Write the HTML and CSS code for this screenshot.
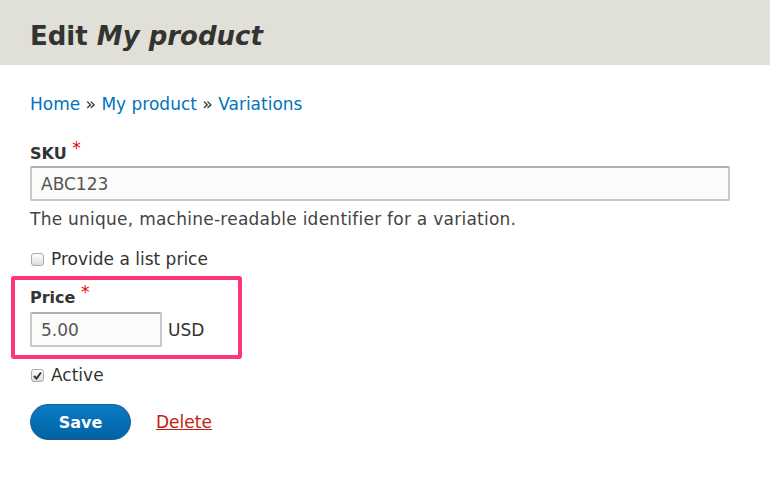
FILE: index.html
```html
<!DOCTYPE html>
<html>
<head>
<meta charset="utf-8">
<link rel="stylesheet" href="styles.css">
</head>
<body>
<header class="page-header">
  <h1 class="title">Edit <em>My product</em></h1>
</header>
<main class="content">
  <nav class="breadcrumb"><a href="#">Home</a> » <a href="#">My product</a> » <a href="#">Variations</a></nav>
  <form class="form">
    <div class="field">
      <label class="label sku-label">SKU <span class="req">*</span></label>
      <input class="text-input wide" type="text" value="ABC123">
      <div class="desc">The unique, machine-readable identifier for a variation.</div>
    </div>
    <div class="check-row">
      <span class="checkbox"></span>
      <span>Provide a list price</span>
    </div>
    <div class="highlight">
      <label class="label">Price <span class="req">*</span></label>
      <div class="price-row">
        <input class="text-input short" type="text" value="5.00">
        <span class="currency">USD</span>
      </div>
    </div>
    <div class="check-row active">
      <span class="checkbox checked"><svg width="9" height="9" viewBox="0 0 9 9"><path d="M1 5 L3.5 7.5 L8 1.5" fill="none" stroke="#333" stroke-width="2"/></svg></span>
      <span>Active</span>
    </div>
    <div class="actions">
      <button type="button" class="btn-save">Save</button>
      <a href="#" class="delete">Delete</a>
    </div>
  </form>
</main>
</body>
</html>
```

FILE: styles.css
```css
* { box-sizing: border-box; }
html, body { margin: 0; padding: 0; background: #fff; }
body {
  font-family: "DejaVu Sans", "Liberation Sans", sans-serif;
  color: #333;
  font-size: 17px;
  width: 770px;
  height: 484px;
  overflow: hidden;
}
.page-header {
  background: #e0e0d8;
  height: 65px;
  padding: 0 30px;
  display: flex;
  align-items: center;
}
.title {
  margin: 0;
  font-size: 26px;
  font-weight: bold;
  color: #333;
  padding-top: 6px;
}
.title em { font-style: italic; }
.content { padding: 0 30px; }
.breadcrumb {
  margin-top: 28px;
  font-size: 17px;
  line-height: 22px;
  color: #333;
}
.breadcrumb a { color: #0074bd; text-decoration: none; }
.form { margin-top: 28px; }
.label {
  display: block;
  font-weight: bold;
  font-size: 16px;
  line-height: 20px;
  margin-bottom: 4px;
}
.sku-label { margin-bottom: 2px; }
.req { color: #e00; font-weight: normal; position: relative; top: -5px; font-size: 17px; }
.text-input {
  display: block;
  height: 35px;
  border: 2px solid #c8c8c4;
  border-top-color: #b0b0aa;
  border-radius: 2px;
  background: #fbfbf9;
  font-family: inherit;
  font-size: 17px;
  color: #555;
  padding: 0 9px;
}
.wide { width: 700px; }
.short { width: 132px; }
.desc {
  margin-top: 8px;
  font-size: 17px;
  letter-spacing: 0.25px;
  line-height: 20px;
  color: #444;
}
.check-row {
  display: flex;
  align-items: center;
  gap: 7px;
  margin-top: 20px;
  font-size: 17px;
  line-height: 20px;
}
.checkbox {
  width: 13px;
  height: 13px;
  border: 1px solid #aaa;
  border-radius: 3px;
  background: linear-gradient(#fff, #ddd);
  display: inline-flex;
  align-items: center;
  justify-content: center;
  margin-left: 1px;
}
.highlight {
  margin: 7px 0 0 -19px;
  width: 231px;
  border: 4px solid #ff3377;
  border-radius: 3px;
  padding: 7px 15px 8px 15px;
}
.price-row {
  display: flex;
  align-items: center;
  gap: 6px;
}
.currency { font-size: 17px; }
.check-row.active { margin-top: 6px; }
.actions {
  display: flex;
  align-items: center;
  gap: 25px;
  margin-top: 19px;
}
.btn-save {
  width: 101px;
  height: 36px;
  border-radius: 18px;
  border: 1px solid #1e5c90;
  background: linear-gradient(#0a7bc4, #0063a4);
  color: #fff;
  font-family: inherit;
  font-weight: bold;
  font-size: 16px;
  padding: 0;
}
.delete {
  color: #c4200c;
  font-size: 17px;
  text-decoration: underline;
}
```
